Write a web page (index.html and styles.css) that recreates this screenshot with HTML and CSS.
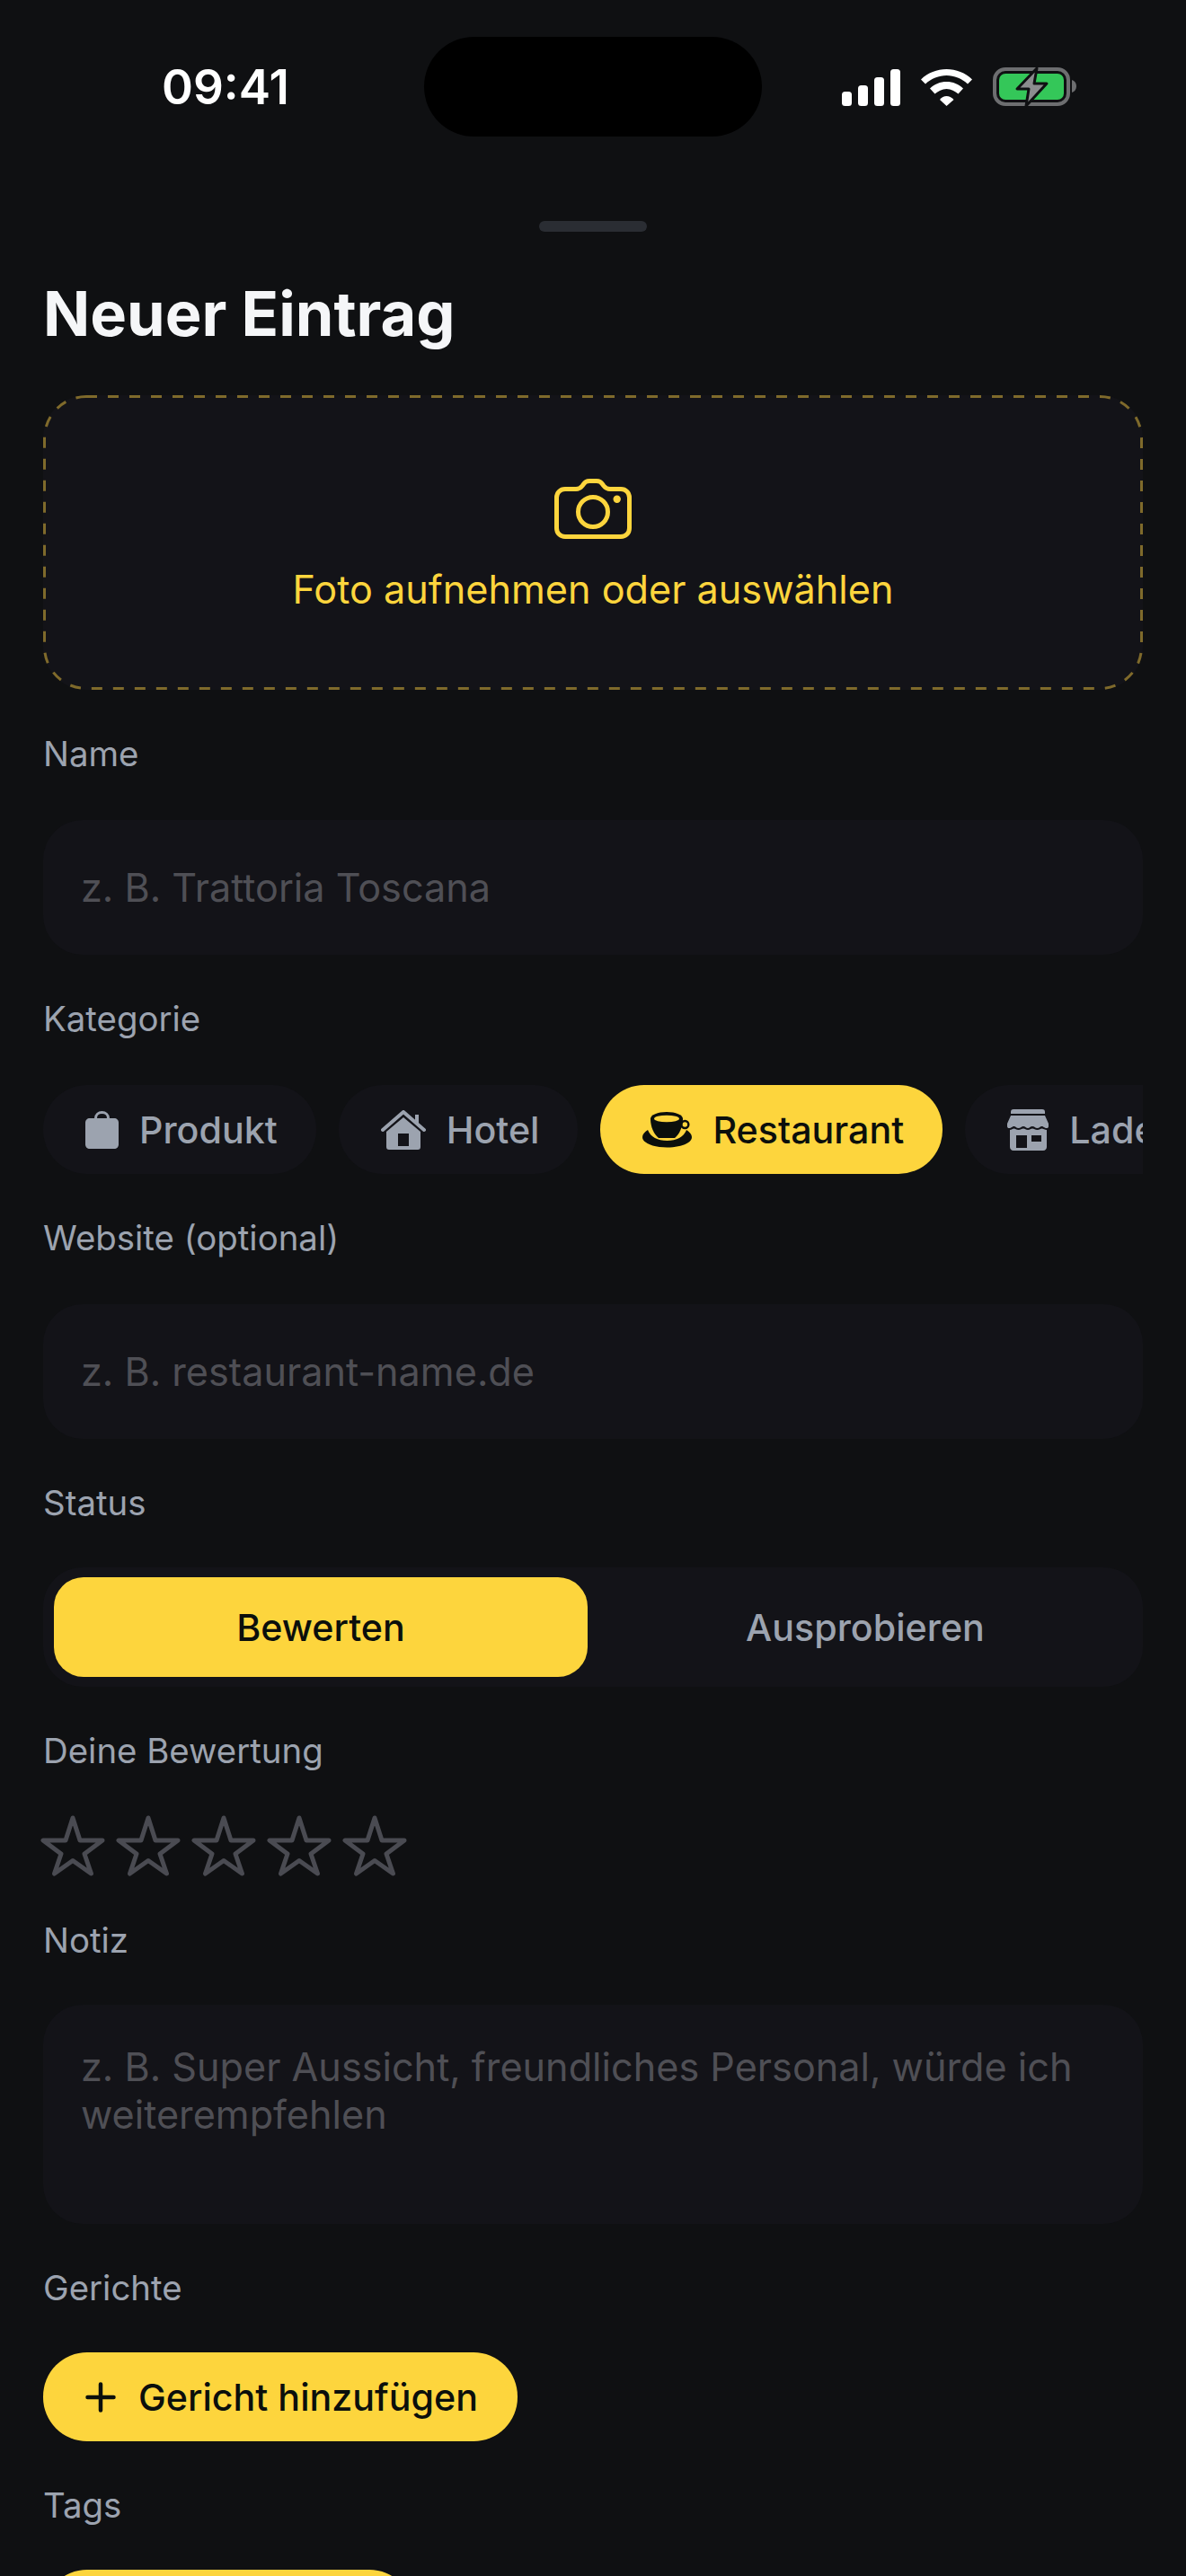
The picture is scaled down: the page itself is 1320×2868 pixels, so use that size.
FILE: index.html
```html
<!DOCTYPE html>
<html lang="de">
<head>
<meta charset="utf-8">
<title>Neuer Eintrag</title>
<link rel="stylesheet" href="styles.css">
</head>
<body>
<div class="screen">
  <header class="status">
    <span class="time">09:41</span>
    <div class="island"></div>
    <div class="status-icons">
      <svg width="65" height="41" viewBox="0 0 65 41" fill="#fff"><rect x="0" y="25" width="11" height="16" rx="3.500"/><rect x="18" y="18" width="11" height="23" rx="3.500"/><rect x="36" y="9" width="11" height="32" rx="3.500"/><rect x="54" y="0" width="11" height="41" rx="3.500"/></svg>
      <svg width="57" height="41" viewBox="0 0 57 41" fill="#fff"><path d="M0 11.500C7.500 4 18 0 28.500 0S49.500 4 57 11.500L52 16.500C45.500 10.500 37 7 28.500 7S11.500 10.500 5 16.500Z"/><path d="M10 21.500C15 16.500 21.500 14 28.500 14S42 16.500 47 21.500L41.500 27.500C38 24.500 33.500 22 28.500 22S19 24.500 15.500 27.500Z"/><path d="M21 34C23 31.500 25.500 30 28.500 30S34 31.500 36.500 34L28.500 41Z"/></svg>
      <svg width="94" height="46" viewBox="0 0 94 46"><rect x="2" y="3" width="82" height="39" rx="12" fill="none" stroke="#6d6e70" stroke-width="4"/><path fill="#6d6e70" d="M88 15c3 1 5 3.500 5 7s-2 6-5 7Z"/><rect x="7" y="8" width="72" height="29" rx="7" fill="#34c759"/><path fill="#8b8c8e" stroke="#0f1012" stroke-width="3" stroke-linejoin="round" d="M49 2 27 25h13l-3 19 23-25H46Z"/></svg>
    </div>
  </header>
  <div class="handle"></div>
  <h1 class="title">Neuer Eintrag</h1>
  <main class="form">
    <button class="upload">
      <svg class="dash" width="1224" height="328" viewBox="0 0 1224 328"><rect x="1.500" y="1.500" width="1221" height="325" rx="46.500" fill="none" stroke="#7f6a2b" stroke-width="3" stroke-dasharray="12 12"/></svg>
      <svg width="86" height="67" viewBox="0 0 86 67" fill="none" stroke="#fdd53d" stroke-width="5"><path d="M12 11.500H24C27 11.500 29 10.500 31 8L32.500 6C34 3.500 36 2.500 39 2.500H47C50 2.500 52 3.500 53.500 6L55 8C57 10.500 59 11.500 62 11.500H74C79.500 11.500 83.500 15.500 83.500 21V55C83.500 60.500 79.500 64.500 74 64.500H12C6.500 64.500 2.500 60.500 2.500 55V21C2.500 15.500 6.500 11.500 12 11.500Z"/><circle cx="43" cy="37" r="16.500"/><circle cx="69.700" cy="22.700" r="4.200" fill="#fdd53d" stroke="none"/></svg>
      <span>Foto aufnehmen oder auswählen</span>
    </button>

    <section class="field field-wide">
      <label class="label">Name</label>
      <div class="input">z. B. Trattoria Toscana</div>
    </section>

    <section class="field field-wide">
      <label class="label">Kategorie</label>
      <div class="chips">
        <div class="chip">
          <svg width="37" height="42" viewBox="0 0 37 42" fill="#9ca3af"><path d="M5 8h27c3 0 5 2 5 5v24c0 3-2 5-5 5H5c-3 0-5-2-5-5V13c0-3 2-5 5-5Z"/><path d="M11.500 10V8c0-4 3-6.500 7-6.500s7 2.500 7 6.500v2" fill="none" stroke="#9ca3af" stroke-width="3"/></svg>
          <span>Produkt</span>
        </div>
        <div class="chip">
          <svg width="50" height="44" viewBox="0 0 50 44" fill="#9ca3af"><path fill-rule="evenodd" d="M25 8 6 24v17c0 2 1 3 3 3h32c2 0 3-1 3-3V24ZM19 26h12v14H19Z"/><path d="M2 22 25 2l23 20" fill="none" stroke="#9ca3af" stroke-width="4" stroke-linecap="round" stroke-linejoin="round"/><rect x="38" y="5" width="4" height="10"/></svg>
          <span>Hotel</span>
        </div>
        <div class="chip chip-active">
          <svg width="55" height="40" viewBox="0 0 55 40"><path fill="#0b0f0c" d="M6 20C9 28 17 32 27.500 32S46 28 49 20C52.500 22 55 25 55 28 55 34.500 43 39.500 27.500 39.500S0 34.500 0 28C0 25 2.500 22 6 20Z"/><circle cx="47.300" cy="14" r="4" fill="none" stroke="#0b0f0c" stroke-width="2.500"/><path fill="#0b0f0c" d="M9 7.500C9 3.400 17 0 27 0S45 3.400 45 7.500C45 17 41 25 36 29H18C13 25 9 17 9 7.500Z"/><ellipse cx="27" cy="7.500" rx="14" ry="3.800" fill="#fdd53d"/></svg>
          <span>Restaurant</span>
        </div>
        <div class="chip">
          <svg width="46" height="46" viewBox="0 0 46 46" fill="#9ca3af"><path d="M7 0h32c2 0 3 1 3 3v2H4V3c0-2 1-3 3-3ZM4 7h38l4 9v3c0 1.500-1 2-2 2-3 0-3.500-2-5.500-2S36 21 33.500 21 30.500 19 28 19s-3 2-5 2-3-2-5-2-3 2-5.500 2S9.500 19 7.500 19 5 21 2 21c-1 0-2-.5-2-2v-3Z"/><path fill-rule="evenodd" d="M3 23c2 0 3-1.500 4.500-1.500S10 23 12.500 23 16 21.500 18 21.500 20.500 23 23 23s3-1.500 5-1.500 3 1.500 5.500 1.500 3.500-1.500 5-1.500S42 23 44 23v19c0 2-1.500 4-4 4H7c-2.500 0-4-2-4-4ZM10 29v14h12V29Zm17 0v7h11v-7Z"/></svg>
          <span>Laden</span>
        </div>
      </div>
    </section>

    <section class="field field-wide">
      <label class="label">Website (optional)</label>
      <div class="input">z. B. restaurant-name.de</div>
    </section>

    <section class="field">
      <label class="label">Status</label>
      <div class="segment">
        <div class="seg seg-active">Bewerten</div>
        <div class="seg">Ausprobieren</div>
      </div>
    </section>

    <section class="field">
      <label class="label">Deine Bewertung</label>
      <div class="stars">
        <svg class="star" width="72" height="68" viewBox="0 0 72 68"><path d="M36 3 44 28H69L49 43 56.500 65 36 50.500 15.500 65 23 43 3 28H28Z"/></svg>
        <svg class="star" width="72" height="68" viewBox="0 0 72 68"><path d="M36 3 44 28H69L49 43 56.500 65 36 50.500 15.500 65 23 43 3 28H28Z"/></svg>
        <svg class="star" width="72" height="68" viewBox="0 0 72 68"><path d="M36 3 44 28H69L49 43 56.500 65 36 50.500 15.500 65 23 43 3 28H28Z"/></svg>
        <svg class="star" width="72" height="68" viewBox="0 0 72 68"><path d="M36 3 44 28H69L49 43 56.500 65 36 50.500 15.500 65 23 43 3 28H28Z"/></svg>
        <svg class="star" width="72" height="68" viewBox="0 0 72 68"><path d="M36 3 44 28H69L49 43 56.500 65 36 50.500 15.500 65 23 43 3 28H28Z"/></svg>
      </div>
    </section>

    <section class="field">
      <label class="label">Notiz</label>
      <div class="input textarea">z. B. Super Aussicht, freundliches Personal, würde ich weiterempfehlen</div>
    </section>

    <section class="field">
      <label class="label">Gerichte</label>
      <button class="add">
        <svg width="34" height="34" viewBox="0 0 34 34" stroke="#0b0f0c" stroke-width="4.500" stroke-linecap="round"><path d="M17 2.500v29M2.500 17h29"/></svg>
        <span>Gericht hinzufügen</span>
      </button>
    </section>

    <section class="field">
      <label class="label">Tags</label>
      <div class="add-tag"></div>
    </section>
  </main>
</div>
</body>
</html>
```
FILE: styles.css
```css
* { box-sizing: border-box; }
html, body { margin: 0; padding: 0; background: #0f1012; }
body { font-family: Inter, "Liberation Sans", sans-serif; }
.screen { position: relative; width: 1320px; height: 2868px; overflow: hidden; background: #0f1012; }

.status { position: relative; height: 246px; display: flex; justify-content: space-between; align-items: flex-start; padding: 71px 0 0 180px; }
.time { color: #fff; font-size: 53px; font-weight: 600; line-height: 52px; }
.island { position: absolute; left: 472px; top: 41px; width: 376px; height: 111px; border-radius: 56px; background: #000; }
.status-icons { display: flex; align-items: center; gap: 23px; margin: 3px 121px 0 0; }

.handle { width: 120px; height: 12px; margin: 0 auto; border-radius: 6px; background: #2a2d33; }
.title { margin: 52px 0 0 48px; height: 130px; color: #f5f6f8; font-size: 68.500px; font-weight: 700; line-height: 80px; }

.form { display: flex; flex-direction: column; gap: 47px; padding: 0 48px; }

.upload { position: relative; display: flex; flex-direction: column; align-items: center; gap: 30px; width: 100%; height: 328px; padding: 93px 0 0; border: 0; border-radius: 48px; background: #131318; color: #fdd53d; font-family: inherit; font-size: 43.200px; font-weight: 400; line-height: 52px; }
.dash { position: absolute; left: 0; top: 0; }
.field { display: flex; flex-direction: column; gap: 48px; }
.field-wide { gap: 50px; }
.label { height: 48px; color: #9ca3af; font-size: 38.400px; font-weight: 400; line-height: 48px; }
.input { height: 150px; padding: 0 42px; border-radius: 44px; background: #131318; color: #4f4f55; font-size: 43.200px; line-height: 150px; }
.textarea { height: 244px; padding: 43px 42px 0; line-height: 53px; }

.chips { display: flex; gap: 25px; height: 99px; overflow: hidden; }
.chip { flex: none; display: flex; align-items: center; gap: 23px; height: 99px; padding: 0 43px 0 47px; border-radius: 49px; background: #131318; color: #9ca3af; font-size: 41.200px; font-weight: 450; }
.chip svg { flex: none; }
.chip-active { background: #fdd53d; color: #0b0f0c; }

.segment { display: flex; gap: 12px; height: 133px; padding: 11px 12px; border-radius: 44px; background: #131318; }
.seg { flex: 1; display: flex; align-items: center; justify-content: center; border-radius: 33px; color: #9ca3af; font-size: 41.200px; font-weight: 450; }
.seg-active { background: #fdd53d; color: #0b0f0c; }

.stars { display: flex; gap: 12px; margin: 0 0 0 -3px; }
.star { flex: none; fill: none; stroke: #4a4b52; stroke-width: 5; stroke-linejoin: round; }

.add { display: flex; align-items: center; gap: 25px; align-self: flex-start; height: 99px; padding: 0 44px 0 47px; border: 0; border-radius: 49px; background: #fdd53d; color: #0b0f0c; font-family: inherit; font-size: 41.200px; font-weight: 450; }
.add-tag { flex: none; width: 412px; height: 99px; border-radius: 49px; background: #fdd53d; }
```
